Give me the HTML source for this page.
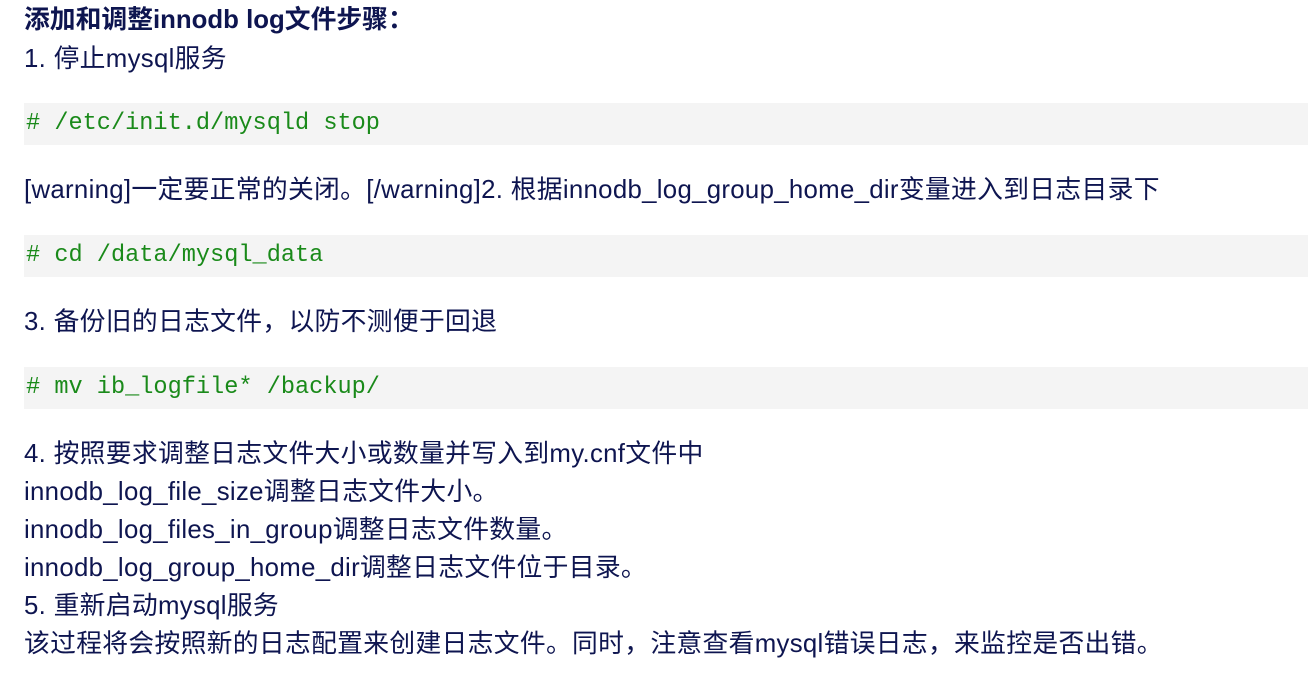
<!DOCTYPE html>
<html><head><meta charset="utf-8"><style>
body{margin:0;width:1308px;height:688px;background:#fff;overflow:hidden;position:relative;font-family:"Liberation Sans","Noto Sans CJK SC",sans-serif;color:#0e1550;font-size:25.8px}
.l{position:absolute;left:24px;line-height:38px;white-space:nowrap;letter-spacing:0.3px}
.b{font-weight:bold;letter-spacing:0}
.c{position:absolute;left:24px;right:0;height:42px;background:#f4f4f4}
.c span{position:absolute;left:2px;top:0;line-height:42px;font-family:"Liberation Mono",monospace;font-size:23.6px;color:#1a8a1a;white-space:pre}
</style></head><body>
<div class="l b" style="top:1px">添加和调整innodb log文件步骤：</div>
<div class="l" style="top:40px">1. 停止mysql服务</div>
<div class="c" style="top:103px"><span># /etc/init.d/mysqld stop</span></div>
<div class="l" style="top:171px">[warning]一定要正常的关闭。[/warning]2. 根据innodb_log_group_home_dir变量进入到日志目录下</div>
<div class="c" style="top:235px"><span># cd /data/mysql_data</span></div>
<div class="l" style="top:303px">3. 备份旧的日志文件，以防不测便于回退</div>
<div class="c" style="top:367px"><span># mv ib_logfile* /backup/</span></div>
<div class="l" style="top:435px">4. 按照要求调整日志文件大小或数量并写入到my.cnf文件中</div>
<div class="l" style="top:473px">innodb_log_file_size调整日志文件大小。</div>
<div class="l" style="top:511px">innodb_log_files_in_group调整日志文件数量。</div>
<div class="l" style="top:549px">innodb_log_group_home_dir调整日志文件位于目录。</div>
<div class="l" style="top:587px">5. 重新启动mysql服务</div>
<div class="l" style="top:625px">该过程将会按照新的日志配置来创建日志文件。同时，注意查看mysql错误日志，来监控是否出错。</div>
</body></html>
